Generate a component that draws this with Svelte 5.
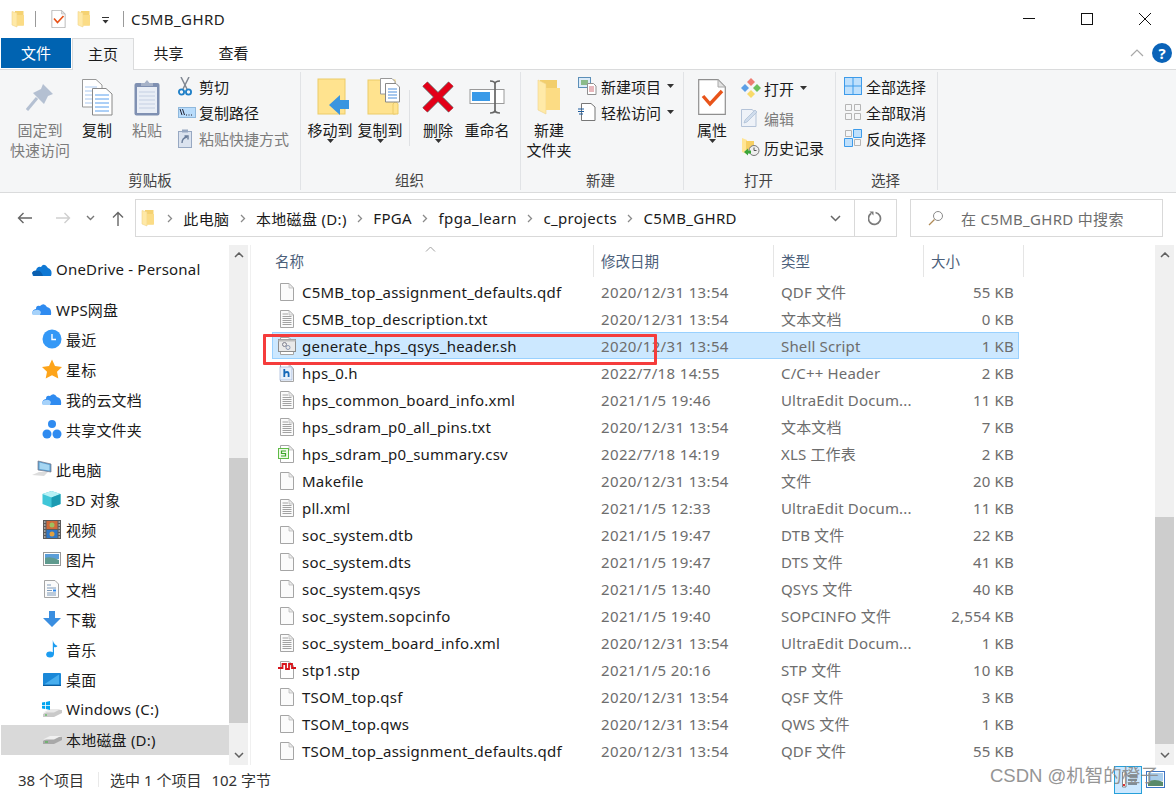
<script>
	const files = [
		['C5MB_top_assignment_defaults.qdf', '2020/12/31 13:54', 'QDF 文件', '55 KB', 'blank'],
		['C5MB_top_description.txt', '2020/12/31 13:54', '文本文档', '0 KB', 'text'],
		['generate_hps_qsys_header.sh', '2020/12/31 13:54', 'Shell Script', '1 KB', 'sh'],
		['hps_0.h', '2022/7/18 14:55', 'C/C++ Header', '2 KB', 'h'],
		['hps_common_board_info.xml', '2021/1/5 19:46', 'UltraEdit Docum...', '11 KB', 'text'],
		['hps_sdram_p0_all_pins.txt', '2020/12/31 13:54', '文本文档', '7 KB', 'text'],
		['hps_sdram_p0_summary.csv', '2022/7/18 14:19', 'XLS 工作表', '2 KB', 'csv'],
		['Makefile', '2020/12/31 13:54', '文件', '20 KB', 'blank'],
		['pll.xml', '2021/1/5 12:33', 'UltraEdit Docum...', '11 KB', 'text'],
		['soc_system.dtb', '2021/1/5 19:47', 'DTB 文件', '22 KB', 'blank'],
		['soc_system.dts', '2021/1/5 19:47', 'DTS 文件', '41 KB', 'blank'],
		['soc_system.qsys', '2021/1/5 13:40', 'QSYS 文件', '40 KB', 'blank'],
		['soc_system.sopcinfo', '2021/1/5 19:40', 'SOPCINFO 文件', '2,554 KB', 'blank'],
		['soc_system_board_info.xml', '2020/12/31 13:54', 'UltraEdit Docum...', '1 KB', 'text'],
		['stp1.stp', '2021/1/5 20:16', 'STP 文件', '10 KB', 'stp'],
		['TSOM_top.qsf', '2020/12/31 13:54', 'QSF 文件', '3 KB', 'blank'],
		['TSOM_top.qws', '2020/12/31 13:54', 'QWS 文件', '1 KB', 'blank'],
		['TSOM_top_assignment_defaults.qdf', '2020/12/31 13:54', 'QDF 文件', '55 KB', 'blank'],
	];
	const crumbs = ['此电脑', '本地磁盘 (D:)', 'FPGA', 'fpga_learn', 'c_projects', 'C5MB_GHRD'];
</script>

{#snippet folder()}
	<svg width="14" height="18" viewBox="0 0 14 18">
		<path d="M4 1H12.5V15.5H4Z" fill="#f5d272" />
		<path d="M1 1.5L6 3V17L1 15Z" fill="#ffe9a6" stroke="#f0d48a" stroke-width=".6" />
		<path d="M6 5H13V15.5H6Z" fill="#fbdc86" />
	</svg>
{/snippet}

{#snippet checkDoc(w, h)}
	<svg width={w} height={h} viewBox="0 0 28 36">
		<path d="M.7.7H20L27.3 8V35.3H.7Z" fill="#fff" stroke="#8f8f8f" stroke-width="1.2" />
		<path d="M20 .7V8H27.3Z" fill="#e2e2e2" stroke="#a8a8a8" />
		<path d="M5 17L12 25L24 12" fill="none" stroke="#e8541a" stroke-width="3.4" />
	</svg>
{/snippet}

{#snippet fileIcon(kind)}
	<svg class="file-icon" width="18" height="18" viewBox="0 0 18 18">
		<path d="M2.5.5H11L15.5 5V17.5H2.5Z" fill={kind === 'blank' || kind === 'text' ? '#fbfbfb' : '#fff'} stroke="#a5a5a5" />
		<path d="M11 .5V5H15.5Z" fill="#ececec" stroke="#b5b5b5" stroke-width=".7" />
		{#if kind === 'text'}
			<path d="M4.5 4H10M4.5 6.5H13.5M4.5 8.5H13.5M4.5 10.5H13.5M4.5 12.5H13.5M4.5 14.5H13.5" stroke="#a2a2a2" />
		{:else if kind === 'sh'}
			<rect x="0.5" y="2.5" width="17" height="12" fill="#e9e9e9" stroke="#8d8d8d" />
			<rect x="0.5" y="2.5" width="17" height="2" fill="#bdbdbd" />
			<circle cx="6.5" cy="7.5" r="2" fill="none" stroke="#7f7f8f" />
			<circle cx="10" cy="10.5" r="2" fill="none" stroke="#8e9bb5" />
		{:else if kind === 'h'}
			<rect x="2" y="3" width="12" height="13" fill="#e8f0fb" stroke="#8aa6cf" stroke-width=".6" />
			<path d="M6.3 5V13M6.3 9.5Q7 8 9 8Q10.6 8 10.6 10V13" fill="none" stroke="#1668b8" stroke-width="1.8" />
		{:else if kind === 'csv'}
			<rect x="0.5" y="3.5" width="10" height="10" fill="#eefae8" stroke="#5fbb46" />
			<path d="M8 6H3.5V8.5H7.5V11H3" fill="none" stroke="#3da52a" stroke-width="1.2" />
		{:else if kind === 'stp'}
			<path d="M0 8H4.5V4H8V9H11V4H14V8H18" transform="translate(0 -1)" fill="none" stroke="#d7151c" stroke-width="1.8" />
		{/if}
	</svg>
{/snippet}

{#snippet caret()}
	<svg class="caret" width="7" height="4" viewBox="0 0 7 4"><path d="M0 0H7L3.5 4Z" fill="#333" /></svg>
{/snippet}

{#snippet cloud(c1, c2)}
	<svg width="20" height="14" viewBox="0 0 20 14">
		<path d="M1 13Q-1 8 4 7Q4 3 8 4Q12 0 15 5Q20 6 19 13Z" fill={c1} />
		<path d="M1 13Q-1 8 4 8Q7 7 9 10L8 13Z" fill={c2} />
	</svg>
{/snippet}

<div class="window">
	<header class="titlebar">
		<span class="qa qa-folder">{@render folder()}</span>
		<span class="qa-sep"></span>
		<span class="qa qa-check">{@render checkDoc(15, 18)}</span>
		<span class="qa qa-folder2">{@render folder()}</span>
		<svg class="qa-drop" width="9" height="7" viewBox="0 0 9 7"><path d="M1 .5H8" stroke="#333" /><path d="M1.5 3H7.5L4.5 6.5Z" fill="#333" /></svg>
		<span class="qa-sep second"></span>
		<span class="title">C5MB_GHRD</span>
		<div class="win-btns">
			<svg width="14" height="14" viewBox="0 0 14 14"><path d="M1 6.5H13" stroke="#111" /></svg>
			<svg width="14" height="14" viewBox="0 0 14 14"><rect x="1.5" y="1.5" width="11" height="11" fill="none" stroke="#111" /></svg>
			<svg width="14" height="14" viewBox="0 0 14 14"><path d="M1 1L13 13M13 1L1 13" stroke="#111" /></svg>
		</div>
	</header>

	<nav class="tabs">
		<span class="tab file-tab">文件</span>
		<span class="tab active">主页</span>
		<span class="tab">共享</span>
		<span class="tab">查看</span>
		<svg class="collapse" width="14" height="8" viewBox="0 0 14 8"><path d="M1 7L7 1L13 7" fill="none" stroke="#a8a8a8" stroke-width="1.2" /></svg>
		<span class="help">?</span>
	</nav>

	<section class="ribbon">
		<div class="group g-clip">
			<div class="tools">
				<div class="big w62 dim">
					<div class="big-icon">
						<svg width="28" height="28" viewBox="0 0 28 28"><path d="M1 27L11 15" stroke="#b4c0d2" stroke-width="3" /><path d="M17 1L27 11L22 13L18 21L7 10L15 6Z" fill="#b4c0d2" /></svg>
					</div>
					<span>固定到</span><span>快速访问</span>
				</div>
				<div class="big w50">
					<div class="big-icon">
						<svg width="31" height="37" viewBox="0 0 31 37">
							<path d="M.5.5H14L20 6V28H.5Z" fill="#fff" stroke="#999" />
							<path d="M3 8H15M3 12H15M3 16H15M3 20H15M3 24H15" stroke="#a9c8f0" />
							<path d="M10.5 9.5H24L30 15V36H10.5Z" fill="#fff" stroke="#888" />
							<path d="M13 16H27M13 20H27M13 24H27M13 28H27M13 32H27" stroke="#5aa0ee" />
						</svg>
					</div>
					<span>复制</span>
				</div>
				<div class="big w50 dim">
					<div class="big-icon">
						<svg width="26" height="37" viewBox="0 0 26 37">
							<rect x="0.5" y="4" width="25" height="32.5" rx="2" fill="#7f90b2" />
							<rect x="3" y="8" width="20" height="26" fill="#e9eef6" />
							<path d="M5 13H21M5 17H21M5 21H21M5 25H21M5 29H21" stroke="#c4cfe2" />
							<path d="M7 7V4H10.5L13 1L15.5 4H19V7Z" fill="#a6b2c8" />
						</svg>
					</div>
					<span>粘贴</span>
				</div>
				<div class="smalls clip">
					<div class="small">
						<span class="s-icon">
							<svg width="14" height="19" viewBox="0 0 14 19"><path d="M3 0L9 12M11 0L5 12" stroke="#808893" stroke-width="1.5" /><circle cx="3.5" cy="15" r="2.6" fill="none" stroke="#1f7fc7" stroke-width="1.8" /><circle cx="10.5" cy="15" r="2.6" fill="none" stroke="#1f7fc7" stroke-width="1.8" /></svg>
						</span>剪切
					</div>
					<div class="small">
						<span class="s-icon">
							<svg width="18" height="11" viewBox="0 0 18 11"><rect x="0.5" y="0.5" width="17" height="10" fill="#b9dcfb" stroke="#8fb8dc" /><path d="M2 2L4 8M4.5 2L6.5 8" stroke="#223" /><path d="M8 8H9M10.5 8H11.5M13 8H14" stroke="#223" /></svg>
						</span>复制路径
					</div>
					<div class="small dim">
						<span class="s-icon">
							<svg width="14" height="19" viewBox="0 0 14 19"><rect x="0.5" y="2.5" width="13" height="16" fill="#dbe3ef" stroke="#97a8c2" /><rect x="4" y="0.5" width="6" height="3" fill="#97a8c2" /><path d="M4 14Q4 9 9 8M6.5 7H10V10.5" fill="none" stroke="#6a7d9a" stroke-width="1.4" /></svg>
						</span>粘贴快捷方式
					</div>
				</div>
			</div>
			<div class="group-name">剪贴板</div>
		</div>

		<div class="group g-org">
			<div class="tools">
				<div class="big w50">
					<div class="big-icon nudge">
						<svg width="33" height="38" viewBox="0 0 33 38"><rect x="1" y="1" width="27" height="35" fill="#ffe38f" stroke="#eccb68" /><path d="M12 27L23 17V22H32V31H23V37Z" fill="#3a95e0" /></svg>
					</div>
					<span>移动到</span>{@render caret()}
				</div>
				<div class="big w50">
					<div class="big-icon nudge">
						<svg width="33" height="38" viewBox="0 0 33 38"><rect x="1" y="2" width="27" height="34" fill="#ffe38f" stroke="#eccb68" /><path d="M26 36H31V26Q29 22 26 26Z" fill="#ffe38f" stroke="#eccb68" /><path d="M13.5 .5H25L28 3.5V16H13.5Z" fill="#fff" stroke="#999" /><path d="M18.5 5.5H29L32.5 9V24H18.5Z" fill="#fff" stroke="#888" /><path d="M21 11H30M21 14H30M21 17H30M21 20H30" stroke="#4c8fdc" /></svg>
					</div>
					<span>复制到</span>{@render caret()}
				</div>
				<span class="inner-sep"></span>
				<div class="big w50">
					<div class="big-icon">
						<svg width="32" height="32" viewBox="0 0 32 32"><path d="M3 3L29 29M29 3L3 29" stroke="#6d6d6d" stroke-width="7.4" /><path d="M3 3L29 29M29 3L3 29" stroke="#e30018" stroke-width="6" /></svg>
					</div>
					<span>删除</span>{@render caret()}
				</div>
				<div class="big w48">
					<div class="big-icon">
						<svg width="36" height="34" viewBox="0 0 36 34"><rect x="1" y="9.5" width="34" height="14" fill="#fff" stroke="#9a9a9a" /><rect x="3" y="12" width="18" height="9" fill="#3a9ae8" /><path d="M21 1Q26 1 26 4V30Q26 33 21 33M31 1Q26 1 26 4M26 30Q26 33 31 33" fill="none" stroke="#666" stroke-width="1.7" /></svg>
					</div>
					<span>重命名</span>
				</div>
			</div>
			<div class="group-name">组织</div>
		</div>

		<div class="group g-new">
			<div class="tools">
				<div class="big w56">
					<div class="big-icon">
						<svg width="24" height="36" viewBox="0 0 24 36"><path d="M3 1H20V31H3Z" fill="#f2ce6c" /><path d="M1 1L9 5V35L1 31Z" fill="#ffeaa8" stroke="#f0d48a" stroke-width=".6" /><path d="M9 9H23V31H9Z" fill="#fcdc84" /></svg>
					</div>
					<span>新建</span><span>文件夹</span>
				</div>
				<div class="smalls">
					<div class="small">
						<span class="s-icon">
							<svg width="19" height="18" viewBox="0 0 19 18"><rect x="0.5" y="0.5" width="12" height="10" fill="#dcebf8" stroke="#5c8fb8" /><rect x="3" y="3" width="7" height="5" fill="#8bbb8a" /><path d="M9.5 6.5H15.5L18 9V17.5H9.5Z" fill="#fff" stroke="#8f8f8f" /><path d="M11 10H16M11 12H16M11 14H16" stroke="#d0717a" /></svg>
						</span>新建项目{@render caret()}
					</div>
					<div class="small">
						<span class="s-icon">
							<svg width="19" height="18" viewBox="0 0 19 18"><path d="M3.5.5H13L17 4V17.5H3.5Z" fill="#fff" stroke="#777" /><path d="M0 6H6M0 8.5H6M1 11H5" stroke="#1e5d9e" /></svg>
						</span>轻松访问{@render caret()}
					</div>
				</div>
			</div>
			<div class="group-name">新建</div>
		</div>

		<div class="group g-open">
			<div class="tools">
				<div class="big w56">
					<div class="big-icon">{@render checkDoc(28, 36)}</div>
					<span>属性</span>{@render caret()}
				</div>
				<div class="smalls wide">
					<div class="small">
						<span class="s-icon">
							<svg width="20" height="20" viewBox="0 0 20 20"><path d="M10 0L14 4L10 8L6 4Z" fill="#ee7c72" /><path d="M16 6L20 10L16 14L12 10Z" fill="#6cbf5c" /><path d="M10 12L14 16L10 20L6 16Z" fill="#f8da6a" /><path d="M4 6L8 10L4 14L0 10Z" fill="#5d9fe6" /></svg>
						</span>打开{@render caret()}
					</div>
					<div class="small dim">
						<span class="s-icon">
							<svg width="17" height="18" viewBox="0 0 17 18"><path d="M.5.5H11L15 4V17.5H.5Z" fill="#eef2f8" stroke="#b4c3d8" /><path d="M3 14L4 11L14 1L16 3L6 13Z" fill="#cfdcec" stroke="#a9bbd2" stroke-width=".7" /></svg>
						</span>编辑
					</div>
					<div class="small">
						<span class="s-icon">
							<svg width="19" height="18" viewBox="0 0 19 18"><path d="M1 0L6 2V16L1 14Z" fill="#ffe594" /><path d="M5 3H13V12H5Z" fill="#f6cf63" /><circle cx="13" cy="12.5" r="5" fill="#eee" stroke="#777" /><path d="M13 9.5V12.5H15.5" fill="none" stroke="#555" /><path d="M3 14L7 10.5V12.5H10V15.5H7V17.5Z" fill="#3ba53a" /></svg>
						</span>历史记录
					</div>
				</div>
			</div>
			<div class="group-name">打开</div>
		</div>

		<div class="group g-sel">
			<div class="tools">
				<div class="smalls sel">
					<div class="small">
						<span class="s-icon">
							<svg width="18" height="18" viewBox="0 0 18 18"><rect x="0.5" y="0.5" width="17" height="17" fill="#bfe0fc" stroke="#3d9bea" /><path d="M9 0V18M0 9H18" stroke="#3d9bea" /></svg>
						</span>全部选择
					</div>
					<div class="small">
						<span class="s-icon">
							<svg width="18" height="18" viewBox="0 0 18 18"><path d="M1.5 1.5H7.5V7.5H1.5ZM10.5 1.5H16.5V7.5H10.5ZM1.5 10.5H7.5V16.5H1.5ZM10.5 10.5H16.5V16.5H10.5Z" fill="none" stroke="#b5b5b5" /></svg>
						</span>全部取消
					</div>
					<div class="small">
						<span class="s-icon">
							<svg width="18" height="18" viewBox="0 0 18 18"><path d="M1.5 1.5H7.5V7.5H1.5ZM10.5 10.5H16.5V16.5H10.5Z" fill="none" stroke="#b5b5b5" /><path d="M9.5 .5H17.5V8.5H9.5ZM.5 9.5H8.5V17.5H.5Z" fill="#bfe0fc" stroke="#3d9bea" /></svg>
						</span>反向选择
					</div>
				</div>
			</div>
			<div class="group-name">选择</div>
		</div>
	</section>

	<div class="addressbar">
		<svg class="nav-back" width="16" height="12" viewBox="0 0 16 12"><path d="M15 6H1.5M6.5 1L1.5 6L6.5 11" fill="none" stroke="#666" stroke-width="1.4" /></svg>
		<svg class="nav-fwd" width="16" height="12" viewBox="0 0 16 12"><path d="M1 6H14.5M9.5 1L14.5 6L9.5 11" fill="none" stroke="#cfcfcf" stroke-width="1.4" /></svg>
		<svg class="nav-down" width="9" height="6" viewBox="0 0 9 6"><path d="M1 1L4.5 4.5L8 1" fill="none" stroke="#777" stroke-width="1.4" /></svg>
		<svg class="nav-up" width="12" height="15" viewBox="0 0 12 15"><path d="M6 15V1.5M1 6.5L6 1.5L11 6.5" fill="none" stroke="#666" stroke-width="1.4" /></svg>
		<div class="path">
			<span class="path-folder">{@render folder()}</span>
			{#each crumbs as crumb}
				<svg class="chev" width="6" height="9" viewBox="0 0 6 9"><path d="M1 1L4.5 4.5L1 8" fill="none" stroke="#8a8a8a" stroke-width="1.3" /></svg>
				<span class="crumb">{crumb}</span>
			{/each}
			<svg class="path-down" width="11" height="7" viewBox="0 0 11 7"><path d="M1 1L5.5 5.5L10 1" fill="none" stroke="#666" stroke-width="1.5" /></svg>
			<span class="refresh">
				<svg width="15" height="15" viewBox="0 0 15 15"><path d="M3 2.5A6 6 0 1 0 7.5 1.5" fill="none" stroke="#7a7a7a" stroke-width="1.7" /><path d="M1.5 0.5H5.5V4.5Z" fill="#7a7a7a" /></svg>
			</span>
		</div>
		<div class="search">
			<svg width="16" height="16" viewBox="0 0 16 16"><circle cx="10" cy="6" r="4.5" fill="none" stroke="#8a8a8a" /><path d="M6.5 9.5L1 15" stroke="#b08a55" stroke-width="1.3" /></svg>
			<span>在 C5MB_GHRD 中搜索</span>
		</div>
	</div>

	<div class="main">
		<aside class="sidebar">
			<div class="tree">
				<div class="node top">
					<span class="n-icon">
						<svg width="20" height="13" viewBox="0 0 20 13"><path d="M1 13Q-1 8 4 7.5Q5 3 9 4Q12 -1 16 5Q21 7 19 13Z" fill="#0f78d4" /><path d="M0 10Q1 7 5 8Q9 7 11 13H2Z" fill="#0a5fb0" /></svg>
					</span>OneDrive - Personal
				</div>
				<div class="gap"></div>
				<div class="node top"><span class="n-icon">{@render cloud('#2f8bf0', '#a6d2fa')}</span>WPS网盘</div>
				<div class="node">
					<span class="n-icon">
						<svg width="20" height="20" viewBox="0 0 20 20"><circle cx="10" cy="10" r="9.5" fill="#3498f6" /><path d="M10 5V10.5H14" fill="none" stroke="#fff" stroke-width="1.4" /></svg>
					</span>最近
				</div>
				<div class="node">
					<span class="n-icon">
						<svg width="20" height="20" viewBox="0 0 20 20"><path d="M10 0.5L13 7L20 8L15 12.8L16.3 19.5L10 16.2L3.7 19.5L5 12.8L0 8L7 7Z" fill="#fda41a" /></svg>
					</span>星标
				</div>
				<div class="node"><span class="n-icon">{@render cloud('#2f8bf0', '#a6d2fa')}</span>我的云文档</div>
				<div class="node">
					<span class="n-icon">
						<svg width="20" height="20" viewBox="0 0 20 20"><circle cx="10" cy="5" r="4" fill="#2f8bf0" /><circle cx="5" cy="15" r="4.5" fill="#2f8bf0" /><circle cx="15" cy="15" r="4.5" fill="#2f8bf0" /></svg>
					</span>共享文件夹
				</div>
				<div class="gap"></div>
				<div class="node top">
					<span class="n-icon">
						<svg width="20" height="18" viewBox="0 0 20 18"><path d="M6 1L19 4V12L6 10Z" fill="#5b9fd0" stroke="#778" stroke-width=".7" /><path d="M7.5 2.5L17.5 5V10.5L7.5 9Z" fill="#a6d6f2" /><path d="M0 15L7 12H16L12 16Z" fill="#dcdcdc" /></svg>
					</span>此电脑
				</div>
				<div class="node">
					<span class="n-icon">
						<svg width="19" height="18" viewBox="0 0 19 18"><path d="M9.5 1L18.5 4V14L9.5 17.5L.5 14V4Z" fill="#3fc6d8" /><path d="M.5 4L9.5 7.5L18.5 4L9.5 1Z" fill="#b8f1f5" /><path d="M9.5 7.5V17.5L18.5 14V4Z" fill="#1c9bb2" /></svg>
					</span>3D 对象
				</div>
				<div class="node">
					<span class="n-icon">
						<svg width="18" height="19" viewBox="0 0 18 19"><rect width="18" height="19" fill="#5a5a5a" /><rect x="3.5" y="1" width="11" height="8" fill="#d06a3a" /><rect x="3.5" y="10" width="11" height="8" fill="#2f78c8" /><circle cx="9" cy="5" r="2.5" fill="#9cc060" /><circle cx="9" cy="14" r="2.5" fill="#e0a040" /><path d="M1 2H2.5M1 5H2.5M1 8H2.5M1 11H2.5M1 14H2.5M1 17H2.5M15.5 2H17M15.5 5H17M15.5 8H17M15.5 11H17M15.5 14H17M15.5 17H17" stroke="#eee" /></svg>
					</span>视频
				</div>
				<div class="node">
					<span class="n-icon">
						<svg width="18" height="14" viewBox="0 0 18 14"><rect x="0.5" y="0.5" width="17" height="13" fill="#fff" stroke="#9a9a9a" /><rect x="2" y="2" width="14" height="5" fill="#5b9ed8" /><path d="M2 6Q8 4 16 8V12H2Z" fill="#5f9a8e" /></svg>
					</span>图片
				</div>
				<div class="node">
					<span class="n-icon">
						<svg width="15" height="18" viewBox="0 0 15 18"><path d="M.5.5H11L14.5 4V17.5H.5Z" fill="#fbfbfb" stroke="#a5a5a5" /><path d="M3 5H7M3 8H12M3 10.5H8M3 13H12M3 15H12" stroke="#7e9ab8" /><path d="M9 10.5H12" stroke="#2f8bf0" stroke-width="2" /></svg>
					</span>文档
				</div>
				<div class="node">
					<span class="n-icon">
						<svg width="18" height="16" viewBox="0 0 18 16"><path d="M6 0H12V7H18L9 16L0 7H6Z" fill="#3a8ee0" /></svg>
					</span>下载
				</div>
				<div class="node">
					<span class="n-icon">
						<svg width="12" height="18" viewBox="0 0 12 18"><ellipse cx="4" cy="14.5" rx="3.8" ry="3" fill="#1c9cf0" /><path d="M6.8 14.5V0Q7.5 4 11.5 6Q10 8 8 7V14.5Z" fill="#1c9cf0" /></svg>
					</span>音乐
				</div>
				<div class="node">
					<span class="n-icon">
						<svg width="18" height="13" viewBox="0 0 18 13"><rect width="18" height="13" rx="1" fill="#1a88d8" /><path d="M1 11.5L16 1.5V11.5Z" fill="#48aeee" /><rect y="11.8" width="18" height="1.2" fill="#0d5d9e" /></svg>
					</span>桌面
				</div>
				<div class="node">
					<span class="n-icon">
						<svg width="20" height="16" viewBox="0 0 20 16"><path d="M1 13L8 9H20V12L12 16H1Z" fill="#c9c9c9" /><path d="M1 11.5L8 8H19L12 11.5Z" fill="#e8e8e8" /><path d="M3 14H5" stroke="#3cb83c" /><path d="M0 1.5L3 1V4H0ZM3.8 1L8 0V4H3.8ZM0 4.8H3V8L0 7.5ZM3.8 4.8H8V9L3.8 8.1Z" fill="#00a4ef" /></svg>
					</span>Windows (C:)
				</div>
				<div class="node selected">
					<span class="n-icon">
						<svg width="20" height="10" viewBox="0 0 20 10"><path d="M1 7L8 3H20V6L12 10H1Z" fill="#a8a8a8" /><path d="M1 5.5L8 2H19L12 5.5Z" fill="#f0f0f0" /><path d="M3 8H6" stroke="#3cb83c" /></svg>
					</span>本地磁盘 (D:)
				</div>
			</div>
			<div class="scrollbar side-scroll">
				<svg class="arrow" width="10" height="6" viewBox="0 0 10 6"><path d="M1 5L5 1L9 5" fill="none" stroke="#606060" stroke-width="1.5" /></svg>
				<div class="thumb"></div>
				<svg class="arrow last" width="10" height="6" viewBox="0 0 10 6"><path d="M1 1L5 5L9 1" fill="none" stroke="#606060" stroke-width="1.5" /></svg>
			</div>
		</aside>

		<div class="content">
			<div class="list">
				<div class="head">
					<span class="h-name">名称</span>
					<span>修改日期</span>
					<span>类型</span>
					<span>大小</span>
					<svg class="sort" width="11" height="6" viewBox="0 0 11 6"><path d="M1 5.5L5.5 1L10 5.5" fill="none" stroke="#a0a0a0" /></svg>
				</div>
				{#each files as [name, date, type, size, icon], i}
					<div class="row" class:selected={i === 2}>
						<span class="name">{@render fileIcon(icon)}{name}</span>
						<span class="meta date">{date}</span>
						<span class="meta type">{type}</span>
						<span class="meta size">{size}</span>
					</div>
				{/each}
			</div>
			<div class="scrollbar list-scroll">
				<svg class="arrow" width="10" height="6" viewBox="0 0 10 6"><path d="M1 5L5 1L9 5" fill="none" stroke="#606060" stroke-width="1.5" /></svg>
				<div class="thumb"></div>
				<svg class="arrow last" width="10" height="6" viewBox="0 0 10 6"><path d="M1 1L5 5L9 1" fill="none" stroke="#606060" stroke-width="1.5" /></svg>
			</div>
		</div>
	</div>

	<footer class="status">
		<span class="count">38 个项目</span>
		<span class="status-sep"></span>
		<span>选中 1 个项目</span>
		<span class="bytes">102 字节</span>
		<div class="views">
			<span class="view on">
				<svg width="19" height="20" viewBox="0 0 19 20"><path d="M3.5 2H7V17H3.5Z" fill="#fff" stroke="#444" stroke-width=".6" /><rect x="4" y="14" width="2" height="2" fill="#d33" /><path d="M9 6H18M9 10H18M9 14H18" stroke="#333" /></svg>
			</span>
			<span class="view">
				<svg width="19" height="17" viewBox="0 0 19 17"><rect x="0.5" y="0.5" width="18" height="16" fill="#fff" stroke="#3d75c4" /><rect x="2" y="2" width="15" height="8" fill="#a9cdeb" /><path d="M2 11Q8 7 17 11V15H2Z" fill="#5a8a6a" /></svg>
			</span>
		</div>
	</footer>

	<div class="callout"></div>
	<div class="watermark">CSDN @机智的橙子</div>
</div>

<style>
	:global(body) {
		margin: 0;
		background: #fff;
	}

	.window {
		position: relative;
		display: flex;
		flex-direction: column;
		width: 1176px;
		height: 795px;
		overflow: hidden;
		background: #fff;
		color: #1a1a1a;
		font-family: "Noto Sans", "Noto Sans CJK SC", sans-serif;
		font-size: 15px;
	}

	.titlebar {
		display: flex;
		align-items: center;
		height: 38px;
		flex-shrink: 0;
	}

	.qa {
		display: flex;
	}

	.qa-folder {
		margin-left: 11px;
	}

	.qa-sep {
		width: 1px;
		height: 16px;
		background: #9a9a9a;
		margin-left: 10px;
	}

	.qa-sep.second {
		margin-left: 13px;
	}

	.qa-check {
		margin-left: 15px;
	}

	.qa-folder2 {
		margin-left: 11px;
	}

	.qa-drop {
		margin-left: 10px;
		margin-top: 2px;
	}

	.title {
		margin-left: 7px;
		color: #222;
		letter-spacing: .4px;
	}

	.win-btns {
		display: flex;
		gap: 44px;
		margin-left: auto;
		margin-right: 24px;
		margin-top: -1px;
	}

	.tabs {
		position: relative;
		display: flex;
		align-items: stretch;
		height: 32px;
		flex-shrink: 0;
		padding-left: 1px;
		box-sizing: border-box;
		border-bottom: 1px solid #dadbdc;
	}

	.tab {
		display: flex;
		align-items: center;
		justify-content: center;
		width: 65px;
		padding-bottom: 3px;
		box-sizing: border-box;
	}

	.file-tab {
		width: 70px;
		height: 30px;
		padding-bottom: 1px;
		background: #0063b1;
		color: #fff;
	}

	.tab.active {
		width: 62px;
		margin-left: 1px;
		margin-right: 2px;
		height: 32px;
		background: #f5f6f7;
		border: 1px solid #dadbdc;
		border-bottom: none;
	}

	.collapse {
		position: absolute;
		left: 1130px;
		top: 11px;
	}

	.help {
		position: absolute;
		left: 1152px;
		top: 5px;
		width: 20px;
		height: 20px;
		border-radius: 50%;
		background: #0a63b8;
		color: #fff;
		font-weight: 700;
		font-size: 15px;
		line-height: 20px;
		text-align: center;
	}

	.ribbon {
		display: flex;
		height: 123px;
		flex-shrink: 0;
		box-sizing: border-box;
		padding-top: 2px;
		background: #f5f6f7;
		border-bottom: 1px solid #dadbdc;
	}

	.group {
		display: flex;
		flex-direction: column;
		height: 118px;
		box-sizing: border-box;
		border-right: 1px solid #e1e3e6;
	}

	.g-clip {
		width: 301px;
	}

	.g-org {
		width: 220px;
	}

	.g-new {
		width: 163px;
	}

	.g-open {
		width: 152px;
	}

	.g-sel {
		width: 102px;
	}

	.tools {
		display: flex;
		flex: 1;
		min-height: 0;
	}

	.g-clip .tools {
		padding-left: 10px;
	}

	.g-org .tools {
		padding-left: 4px;
	}

	.group-name {
		height: 20px;
		line-height: 20px;
		text-align: center;
		color: #444;
		font-size: 14.5px;
		flex-shrink: 0;
	}

	.g-org .group-name,
	.g-open .group-name,
	.g-sel .group-name {
		padding-right: 2px;
	}

	.g-new .group-name {
		padding-right: 3px;
	}

	.big {
		display: flex;
		flex-direction: column;
		align-items: center;
		padding-top: 4px;
		line-height: 20px;
		box-sizing: border-box;
		white-space: nowrap;
		flex-shrink: 0;
	}

	.big-icon {
		display: flex;
		align-items: center;
		justify-content: center;
		height: 42px;
		margin-bottom: 2px;
	}

	.big-icon.nudge {
		padding-left: 6px;
	}

	.big .caret {
		margin-top: -1px;
	}

	.w62 {
		width: 62px;
		padding-right: 2px;
	}

	.w56 {
		width: 56px;
	}

	.w50 {
		width: 50px;
	}

	.w48 {
		width: 48px;
	}

	.dim {
		color: #7c7c7c;
	}

	.inner-sep {
		width: 1px;
		height: 56px;
		margin: 18px 3px 0 4px;
		background: #dfe1e4;
		flex-shrink: 0;
	}

	.smalls {
		margin-left: 1px;
		padding-top: 1px;
	}

	.smalls.clip {
		margin-left: 6px;
	}

	.smalls.clip .s-icon {
		width: 21px;
	}

	.smalls.wide .small {
		height: 30px;
	}

	.smalls.wide .small:last-child {
		margin-top: -1px;
	}

	.smalls.sel {
		margin-left: 8px;
	}

	.smalls.sel .s-icon {
		width: 22px;
	}

	.small {
		display: flex;
		align-items: center;
		height: 26px;
		white-space: nowrap;
	}

	.small .caret {
		margin-left: 6px;
	}

	.s-icon {
		display: flex;
		align-items: center;
		justify-content: flex-start;
		width: 23px;
		flex-shrink: 0;
	}

	.addressbar {
		display: flex;
		align-items: center;
		height: 52px;
		flex-shrink: 0;
		box-sizing: border-box;
		padding-bottom: 2px;
	}

	.nav-back {
		margin-left: 17px;
	}

	.nav-fwd {
		margin-left: 22px;
	}

	.nav-down {
		margin-left: 15px;
	}

	.nav-up {
		margin-left: 17px;
	}

	.path {
		display: flex;
		align-items: center;
		width: 762px;
		height: 38px;
		margin-left: 11px;
		box-sizing: border-box;
		border: 1px solid #d9d9d9;
		padding-left: 5px;
	}

	.path-folder {
		display: flex;
		margin-right: 12px;
	}

	.chev {
		margin-right: 10.3px;
	}

	.crumb {
		margin-right: 10.3px;
		white-space: nowrap;
		letter-spacing: .33px;
	}

	.path-down {
		margin-left: auto;
		margin-right: 13px;
	}

	.refresh {
		display: flex;
		align-items: center;
		justify-content: center;
		width: 41px;
		height: 36px;
		border-left: 1px solid #d9d9d9;
	}

	.search {
		display: flex;
		align-items: center;
		gap: 17px;
		width: 253px;
		height: 38px;
		margin-left: 13px;
		padding-left: 17px;
		box-sizing: border-box;
		border: 1px solid #d9d9d9;
		color: #6d6d6d;
		white-space: nowrap;
		letter-spacing: .3px;
	}

	.main {
		display: flex;
		flex: 1;
		min-height: 0;
	}

	.sidebar {
		display: flex;
		width: 251px;
		flex-shrink: 0;
		box-sizing: border-box;
		border-right: 1px solid #f0f0f0;
	}

	.tree {
		width: 228px;
		margin-left: 1px;
		padding-top: 10px;
		box-sizing: border-box;
		flex-shrink: 0;
		letter-spacing: .2px;
	}

	.gap {
		height: 10px;
	}

	.node {
		display: flex;
		align-items: center;
		height: 30px;
		padding-left: 40px;
		padding-bottom: 2px;
		box-sizing: border-box;
		white-space: nowrap;
	}

	.node.top {
		padding-left: 30px;
	}

	.n-icon {
		display: flex;
		align-items: center;
		justify-content: center;
		width: 21px;
		margin-right: 4px;
		flex-shrink: 0;
	}

	.node.selected {
		background: #d9d9d9;
	}

	.scrollbar {
		display: flex;
		flex-direction: column;
		align-items: center;
		box-sizing: border-box;
		width: 19px;
		background: #f0f0f0;
		flex-shrink: 0;
	}

	.arrow {
		margin: 7px 0;
		flex-shrink: 0;
	}

	.arrow.last {
		margin-top: auto;
	}

	.thumb {
		width: 100%;
		background: #cdcdcd;
	}

	.side-scroll .thumb {
		height: 265px;
		margin-top: 193px;
	}

	.list-scroll {
		margin-right: 2px;
	}

	.list-scroll .thumb {
		height: 227px;
		margin-top: 252px;
	}

	.content {
		display: flex;
		flex: 1;
		min-width: 0;
	}

	.list {
		flex: 1;
		min-width: 0;
	}

	.head {
		position: relative;
		display: grid;
		grid-template-columns: 322px 180px 150px 100px;
		height: 33px;
		margin-left: 21px;
		color: #4c607a;
		font-size: 14.5px;
		line-height: 20px;
	}

	.head span {
		display: flex;
		align-items: center;
		height: 32px;
		padding-left: 7px;
		box-sizing: border-box;
		border-right: 1px solid #e5e5e5;
	}

	.head .h-name {
		padding-left: 3px;
	}

	.sort {
		position: absolute;
		left: 153px;
		top: 1px;
	}

	.row {
		display: grid;
		grid-template-columns: 321px 180px 150px 96px;
		align-items: center;
		width: 747px;
		height: 27px;
		margin-left: 21px;
		box-sizing: border-box;
		border: 1px solid transparent;
		white-space: nowrap;
	}

	.row.selected {
		background: #cce8ff;
		border-color: #99d1ff;
	}

	.name {
		display: flex;
		align-items: center;
		margin-left: -1px;
		padding-left: 6px;
		letter-spacing: .23px;
	}

	.file-icon {
		margin-right: 6px;
		flex-shrink: 0;
	}

	.meta {
		padding-left: 7px;
		color: #6d6d6d;
	}

	.date {
		letter-spacing: .36px;
	}

	.type {
		letter-spacing: .15px;
	}

	.size {
		padding-right: 6px;
		letter-spacing: .17px;
		text-align: right;
	}

	.status {
		display: flex;
		align-items: center;
		height: 30px;
		flex-shrink: 0;
		box-sizing: border-box;
		padding-left: 18px;
		padding-bottom: 1px;
		color: #333;
	}

	.status-sep {
		width: 1px;
		height: 15px;
		margin: 0 11px 0 14px;
		background: #e9e9e9;
	}

	.bytes {
		margin-left: 10px;
	}

	.views {
		display: flex;
		align-items: center;
		margin-left: auto;
		margin-right: 7px;
	}

	.view {
		display: flex;
		align-items: center;
		justify-content: center;
		width: 27px;
		height: 28px;
		box-sizing: border-box;
	}

	.view.on {
		width: 28px;
		background: #cce8ff;
		border: 1px solid #26a0da;
	}

	.callout {
		position: absolute;
		left: 263px;
		top: 334px;
		width: 394px;
		height: 31px;
		box-sizing: border-box;
		border: 3px solid #f53c3c;
		border-radius: 1px;
	}

	.watermark {
		position: absolute;
		left: 990px;
		top: 762px;
		color: #8a8a8a;
		font-family: "Liberation Sans", "Noto Sans CJK SC", sans-serif;
		font-size: 18.5px;
		line-height: 28px;
		white-space: nowrap;
		opacity: .9;
	}
</style>
